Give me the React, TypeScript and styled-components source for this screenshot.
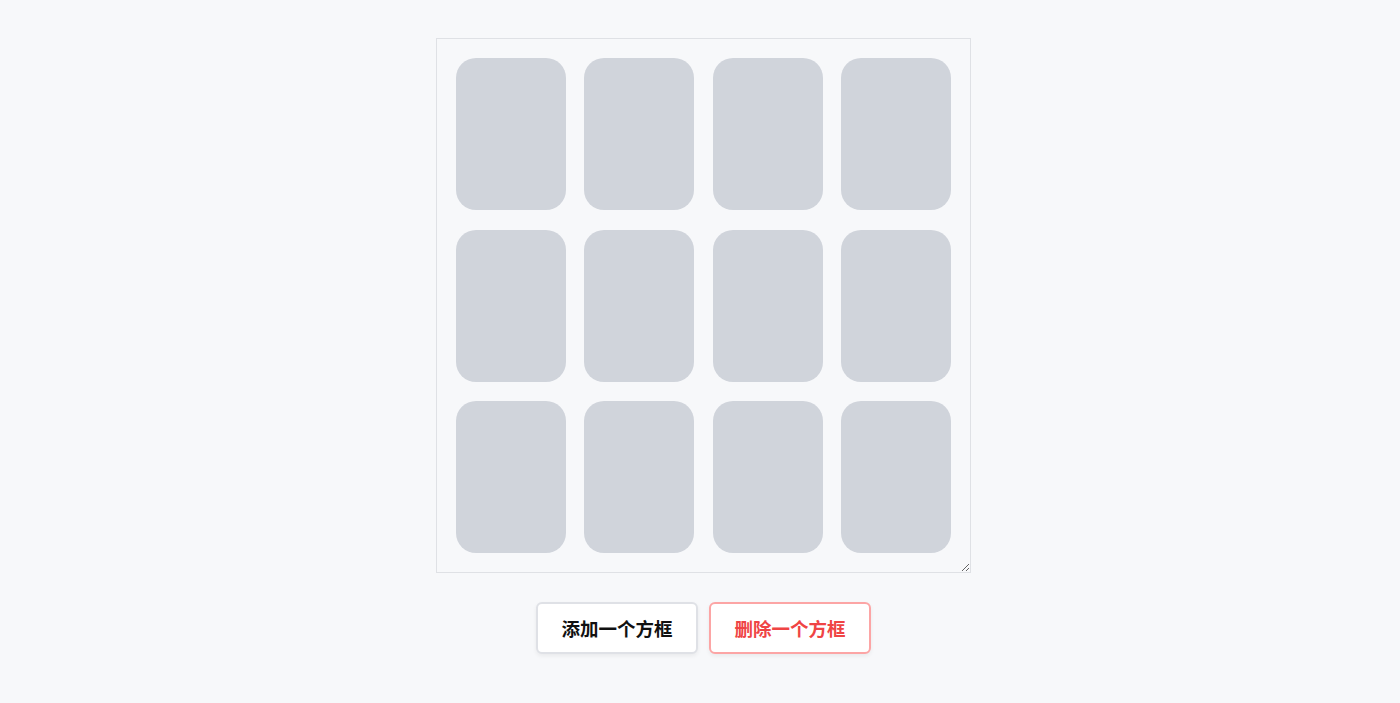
import React, { useState } from 'react';
import styled, { createGlobalStyle } from 'styled-components';

const GlobalStyle = createGlobalStyle`
  html, body {
    margin: 0;
    padding: 0;
    background: #f7f8fa;
    font-family: "Noto Sans CJK SC", "Noto Sans", sans-serif;
  }
`;

const Page = styled.div`
  display: flex;
  flex-direction: column;
  align-items: center;
  padding: 38px 0 0 7px;
  min-height: 100vh;
  box-sizing: border-box;
`;

const Board = styled.div`
  box-sizing: border-box;
  width: 535px;
  height: 535px;
  border: 1px solid #dfe1e5;
  display: grid;
  grid-template-columns: repeat(4, 110px);
  grid-auto-rows: 152px;
  justify-content: space-evenly;
  align-content: space-evenly;
  resize: both;
  overflow: auto;
`;

const Card = styled.div`
  background: #d0d4db;
  border-radius: 20px;
`;

const Actions = styled.div`
  display: flex;
  gap: 11px;
  margin-top: 29px;
`;

const Button = styled.button<{ $danger?: boolean }>`
  box-sizing: border-box;
  width: 162px;
  height: 52px;
  background: #ffffff;
  border: 2px solid ${(p) => (p.$danger ? '#fca5a5' : '#dfe1e6')};
  border-radius: 6px;
  color: ${(p) => (p.$danger ? '#ef4444' : '#111111')};
  font-family: "Noto Sans CJK SC", "Noto Sans", sans-serif;
  font-size: 18.5px;
  font-weight: 700;
  box-shadow: 0 2px 4px rgba(0, 0, 0, 0.06);
  cursor: pointer;
`;

export default function App() {
  const [count, setCount] = useState(12);

  return (
    <Page>
      <GlobalStyle />
      <Board>
        {Array.from({ length: count }).map((_, i) => (
          <Card key={i} />
        ))}
      </Board>
      <Actions>
        <Button onClick={() => setCount((c) => c + 1)}>添加一个方框</Button>
        <Button $danger onClick={() => setCount((c) => Math.max(0, c - 1))}>
          删除一个方框
        </Button>
      </Actions>
    </Page>
  );
}
